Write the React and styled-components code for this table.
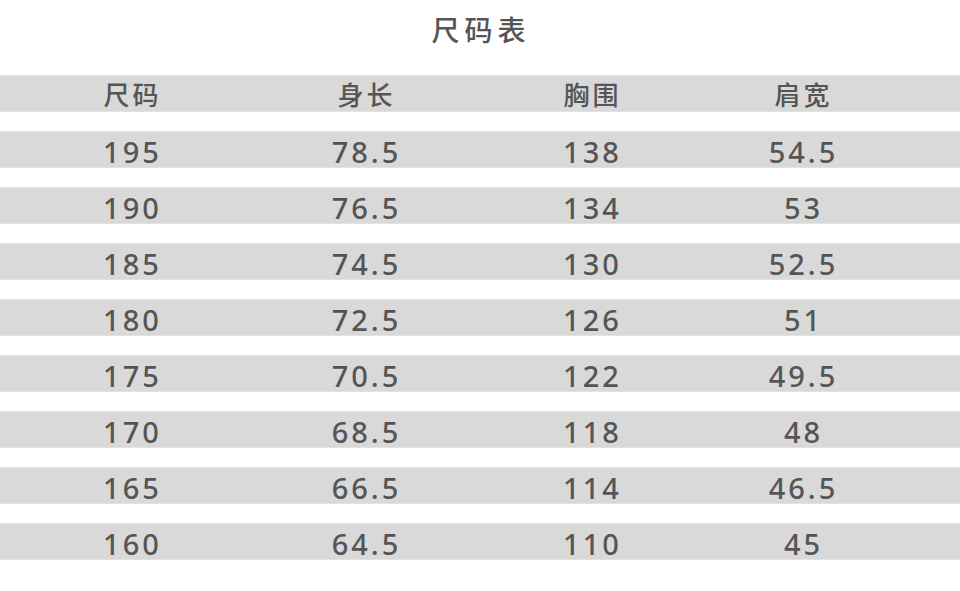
import React from "react";
import styled, { createGlobalStyle } from "styled-components";

const GlobalStyle = createGlobalStyle`
  html, body {
    margin: 0;
    padding: 0;
    background: #ffffff;
  }
  body {
    font-family: "Noto Sans", "Noto Sans CJK SC", sans-serif;
    color: #555555;
  }
`;

const Page = styled.div`
  width: 960px;
  height: 591px;
  overflow: hidden;
`;

const Title = styled.h1`
  margin: 0;
  height: 75px;
  padding-top: 11px;
  box-sizing: border-box;
  text-align: center;
  font-size: 28px;
  font-weight: 500;
  line-height: 38px;
  letter-spacing: 5px;
  text-indent: 2px;
  color: #555555;
`;

const Table = styled.div`
  display: flex;
  flex-direction: column;
  gap: 19px;
`;

const Row = styled.div`
  display: grid;
  grid-template-columns: 262px 206px 246px 176px 1fr;
  align-items: center;
  height: 37px;
  box-sizing: border-box;
  background: #d9d9d9;
  border-top: 1px solid #e2e2e2;
  border-bottom: 1px solid #e2e2e2;
`;

const Cell = styled.div`
  text-align: center;
  font-size: ${(p) => (p.head ? "26px" : "29px")};
  font-weight: 500;
  letter-spacing: 3px;
  text-indent: 3px;
  line-height: 35px;
  padding-top: 2px;
  color: #555555;
  white-space: nowrap;
`;

const HEAD = ["尺码", "身长", "胸围", "肩宽"];

const DATA = [
  ["195", "78.5", "138", "54.5"],
  ["190", "76.5", "134", "53"],
  ["185", "74.5", "130", "52.5"],
  ["180", "72.5", "126", "51"],
  ["175", "70.5", "122", "49.5"],
  ["170", "68.5", "118", "48"],
  ["165", "66.5", "114", "46.5"],
  ["160", "64.5", "110", "45"],
];

const App = () => {
  return (
    <Page>
      <GlobalStyle />
      <Title>尺码表</Title>
      <Table>
        <Row>
          {HEAD.map((item) => (
            <Cell head key={item}>
              {item}
            </Cell>
          ))}
        </Row>
        {DATA.map((row) => (
          <Row key={row[0]}>
            {row.map((item, index) => (
              <Cell key={index}>{item}</Cell>
            ))}
          </Row>
        ))}
      </Table>
    </Page>
  );
};

export default App;
